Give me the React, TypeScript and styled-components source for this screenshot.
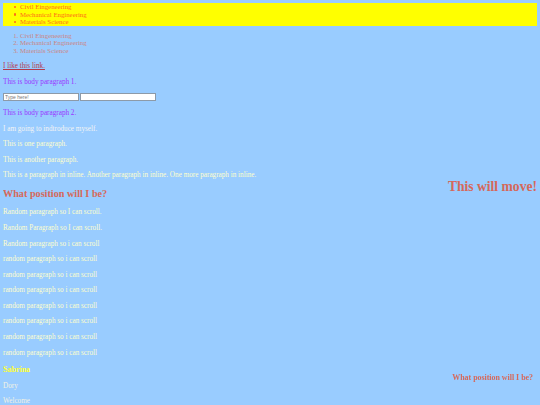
import React from 'react';
import styled, { createGlobalStyle } from 'styled-components';

const GlobalStyle = createGlobalStyle`
  html {
    overflow: hidden;
  }

  body {
    margin: 3px;
    background: #99ccff;
    font-family: 'Liberation Serif', 'Times New Roman', serif;
    font-size: 7.2px;
  }
`;

const Page = styled.div`
  position: relative;
`;

const BulletList = styled.ul`
  margin: 0;
  padding: 0 0 0 17px;
  background: #ffff00;
  color: #ff6a1a;
  font-size: 6.8px;
  line-height: 7.6px;
  list-style: none;
`;

const Bullet = styled.li`
  display: flex;
  align-items: center;

  &::before {
    content: '';
    flex: none;
    width: 2.4px;
    height: 2.4px;
    margin-left: -6px;
    margin-right: 3.6px;
    border-radius: 50%;
    background: currentColor;
  }
`;

const NumberList = styled.ol`
  margin: 6px 0 0;
  padding: 0 0 0 17px;
  color: #cc8585;
  font-size: 6.8px;
  line-height: 7.6px;
`;

const Paragraph = styled.p<{ $color: string }>`
  margin: 7.6px 0;
  line-height: 8px;
  color: ${(p) => p.$color};
`;

const Link = styled.a`
  color: #b23a4a;
  text-decoration: underline;
`;

const InputRow = styled.form`
  display: flex;
  gap: 1px;
  height: 8px;
  margin: 7.6px 0;
`;

const TextInput = styled.input`
  box-sizing: border-box;
  width: 76px;
  height: 8px;
  margin: 0;
  padding: 0 1px;
  border: 1px solid #8d9aa8;
  background: #ffffff;
  font-family: 'Liberation Sans', Arial, sans-serif;
  font-size: 5px;
  line-height: 6px;
  outline: none;

  &::placeholder {
    color: #777777;
  }
`;

const Heading = styled.h2`
  margin: 8.5px 0;
  font-size: 10.2px;
  line-height: 12px;
  font-weight: bold;
  color: #d6685a;
`;

const Name = styled.h3`
  margin: 8.3px 0 7px;
  font-size: 8px;
  line-height: 9.2px;
  font-weight: bold;
  color: #ffff33;
`;

const Mover = styled.div`
  position: absolute;
  top: 176px;
  right: 0;
  font-size: 13.6px;
  line-height: 16px;
  font-weight: bold;
  color: #d6685a;
`;

const Pinned = styled.div`
  position: fixed;
  right: 7px;
  bottom: 23px;
  font-size: 7.9px;
  line-height: 9px;
  font-weight: bold;
  color: #d6685a;
`;

const subjects = ['Civil Eingeneering', 'Mechanical Engineering', 'Materials Science'];

const scrollLines = [
  'Random paragraph so I can scroll.',
  'Random Paragraph so I can scroll.',
  'Random paragraph so i can scroll',
  'random paragraph so i can scroll',
  'random paragraph so i can scroll',
  'random paragraph so i can scroll',
  'random paragraph so i can scroll',
  'random paragraph so i can scroll',
  'random paragraph so i can scroll',
  'random paragraph so i can scroll',
];

export default function App(): JSX.Element {
  return (
    <>
      <GlobalStyle />
      <Page>
        <BulletList>
          {subjects.map((s, i) => (
            <Bullet key={`ul-${i}`}>{s}</Bullet>
          ))}
        </BulletList>
        <NumberList>
          {subjects.map((s, i) => (
            <li key={`ol-${i}`}>{s}</li>
          ))}
        </NumberList>

        <Paragraph $color="#b23a4a">
          <Link href="#">I like this link.</Link>
        </Paragraph>
        <Paragraph $color="#9933ff">This is body paragraph 1.</Paragraph>
        <InputRow onSubmit={(e) => e.preventDefault()}>
          <TextInput type="text" placeholder="Type here!" />
          <TextInput type="text" />
        </InputRow>
        <Paragraph $color="#9933ff">This is body paragraph 2.</Paragraph>

        <Paragraph $color="#f4f4f4">I am going to indtroduce myself.</Paragraph>
        <Paragraph $color="#ffffcc">This is one paragraph.</Paragraph>
        <Paragraph $color="#ffffcc">This is another paragraph.</Paragraph>
        <Paragraph $color="#ffffcc">
          This is a paragraph in inline. Another paragraph in inline. One more paragraph in inline.
        </Paragraph>

        <Heading>What position will I be?</Heading>
        {scrollLines.map((line, i) => (
          <Paragraph key={`line-${i}`} $color="#ffffcc">
            {line}
          </Paragraph>
        ))}

        <Name>Sabrina</Name>
        <Paragraph $color="#f2f2e4">Dory</Paragraph>
        <Paragraph $color="#f2f2e4">Welcome</Paragraph>

        <Mover>This will move!</Mover>
      </Page>
      <Pinned>What position will I be?</Pinned>
    </>
  );
}
